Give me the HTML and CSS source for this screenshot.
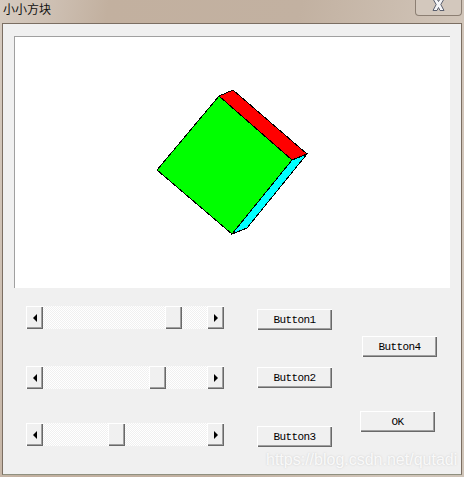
FILE: index.html
```html
<!DOCTYPE html>
<html lang="zh">
  <head>
    <meta charset="UTF-8" />
    <title>小小方块</title>
    <link rel="stylesheet" href="styles.css">
  </head>
  <body>
    <div class="titlebar">
      <span class="title">小小方块</span>
      <div class="close-btn">
        <svg width="13" height="11" viewBox="0 0 13 11">
          <path d="M1 -1 H5 L6.5 1.5 L8 -1 H12 L8.8 4.5 L12 10.5 H8 L6.5 7.5 L5 10.5 H1 L4.2 4.5 Z" fill="#f4f4f6" stroke="#5a5f6e" stroke-width="1" />
        </svg>
      </div>
    </div>

    <div class="client">
      <div class="canvas">
        <svg class="cube" width="435" height="251" viewBox="15 37 435 251" shape-rendering="crispEdges">
          <polygon points="219,96 233,90 307,154 292,160" fill="#ff0000" stroke="#000" />
          <polygon points="292,160 307,154 247,228 232,234" fill="#00ffff" stroke="#000" />
          <polygon points="219,96 292,160 232,234 157,170" fill="#00ff00" stroke="#000" />
        </svg>
      </div>

      <div class="controls">
        <div class="sliders">
          <div class="scrollbar first">
            <div class="arrow-btn"><span class="arrow-left"></span></div>
            <div class="track"><div class="thumb" style="margin-left: 122px"></div></div>
            <div class="arrow-btn"><span class="arrow-right"></span></div>
          </div>
          <div class="scrollbar second">
            <div class="arrow-btn"><span class="arrow-left"></span></div>
            <div class="track"><div class="thumb" style="margin-left: 106px"></div></div>
            <div class="arrow-btn"><span class="arrow-right"></span></div>
          </div>
          <div class="scrollbar third">
            <div class="arrow-btn"><span class="arrow-left"></span></div>
            <div class="track"><div class="thumb" style="margin-left: 65px"></div></div>
            <div class="arrow-btn"><span class="arrow-right"></span></div>
          </div>
        </div>

        <div class="btn-col">
          <button class="btn">Button1</button>
          <button class="btn btn-2">Button2</button>
          <button class="btn btn-3">Button3</button>
        </div>

        <div class="btn-col side">
          <button class="btn btn-4">Button4</button>
          <button class="btn btn-ok">OK</button>
        </div>
      </div>

      <span class="watermark">https://blog.csdn.net/qutadi</span>
    </div>
  </body>
</html>
```

FILE: styles.css
```css
* {
  box-sizing: border-box;
}
html,
body {
  width: 464px;
  height: 477px;
  overflow: hidden;
}
body {
  margin: 0;
  background: linear-gradient(100deg, #d6cbc0 0, #cdbfb2 10%, #c2b09f 20%, #c2b1a1 55%, #d1c5b9 85%, #cfc4b8 100%);
  font-family: "Liberation Mono", monospace;
}
.titlebar {
  height: 23px;
  display: flex;
  justify-content: space-between;
  align-items: flex-start;
  padding-left: 3px;
  padding-right: 2px;
}
.title {
  font-family: "Noto Sans CJK SC", sans-serif;
  font-size: 12px;
  line-height: 18px;
  color: #111;
}
.close-btn {
  width: 47px;
  height: 16px;
  display: flex;
  justify-content: center;
  border: 1px solid #8c7f73;
  border-top: none;
  border-radius: 0 0 4px 4px;
  background: #d3c8bd;
}
.client {
  position: relative;
  width: 460px;
  height: 452px;
  margin-left: 2px;
  padding: 12px 11px 0;
  background: #f0f0f0;
  border: 1px solid #7b6e62;
  border-bottom-color: #8f9080;
}
.canvas {
  width: 436px;
  height: 252px;
  background: #fff;
  border-top: 1px solid #a0a0a0;
  border-left: 1px solid #a0a0a0;
}
.cube {
  display: block;
}
.controls {
  display: flex;
  align-items: flex-start;
  margin-top: 18px;
  padding-left: 12px;
}
.sliders {
  display: flex;
  flex-direction: column;
  width: 198px;
}
.scrollbar {
  display: flex;
  height: 23px;
}
.second {
  margin-top: 37px;
}
.third {
  margin-top: 34px;
}
.arrow-btn {
  flex: none;
  width: 17px;
  height: 23px;
  display: flex;
  align-items: center;
  justify-content: center;
  background: #f0f0f0;
  box-shadow: inset 1px 1px 0 #fff, inset -1px -1px 0 #696969, inset -2px -2px 0 #a0a0a0;
}
.arrow-left {
  border-top: 4px solid transparent;
  border-bottom: 4px solid transparent;
  border-right: 4px solid #000;
}
.arrow-right {
  border-top: 4px solid transparent;
  border-bottom: 4px solid transparent;
  border-left: 4px solid #000;
}
.track {
  flex: 1;
  background-color: #fff;
  background-image: conic-gradient(#f0f0f0 25%, #fff 0 50%, #f0f0f0 0 75%, #fff 0);
  background-size: 2px 2px;
}
.thumb {
  width: 17px;
  height: 23px;
  background: #f0f0f0;
  box-shadow: inset 1px 1px 0 #fff, inset -1px -1px 0 #696969, inset -2px -2px 0 #a0a0a0;
}
.btn-col {
  display: flex;
  flex-direction: column;
  align-items: flex-start;
  padding-top: 3px;
  margin-left: 33px;
}
.btn {
  width: 75px;
  height: 21px;
  padding: 0;
  border: none;
  background: #f0f0f0;
  box-shadow: inset 1px 1px 0 #fff, inset -1px -1px 0 #696969, inset -2px -2px 0 #a0a0a0;
  font-family: "Liberation Mono", monospace;
  font-size: 11px;
  letter-spacing: -0.6px;
  color: #000;
}
.btn-2 {
  margin-top: 37px;
}
.btn-3 {
  margin-top: 38px;
}
.side {
  margin-left: 28px;
  padding-top: 30px;
}
.btn-4 {
  margin-left: 2px;
}
.btn-ok {
  margin-top: 54px;
}
.watermark {
  position: absolute;
  left: 263px;
  top: 426px;
  font-family: "Liberation Sans", sans-serif;
  font-size: 16px;
  line-height: 20px;
  white-space: nowrap;
  color: rgba(255, 255, 255, 0.85);
  text-shadow: 0 0 2px rgba(190, 190, 190, 0.7);
}
```
